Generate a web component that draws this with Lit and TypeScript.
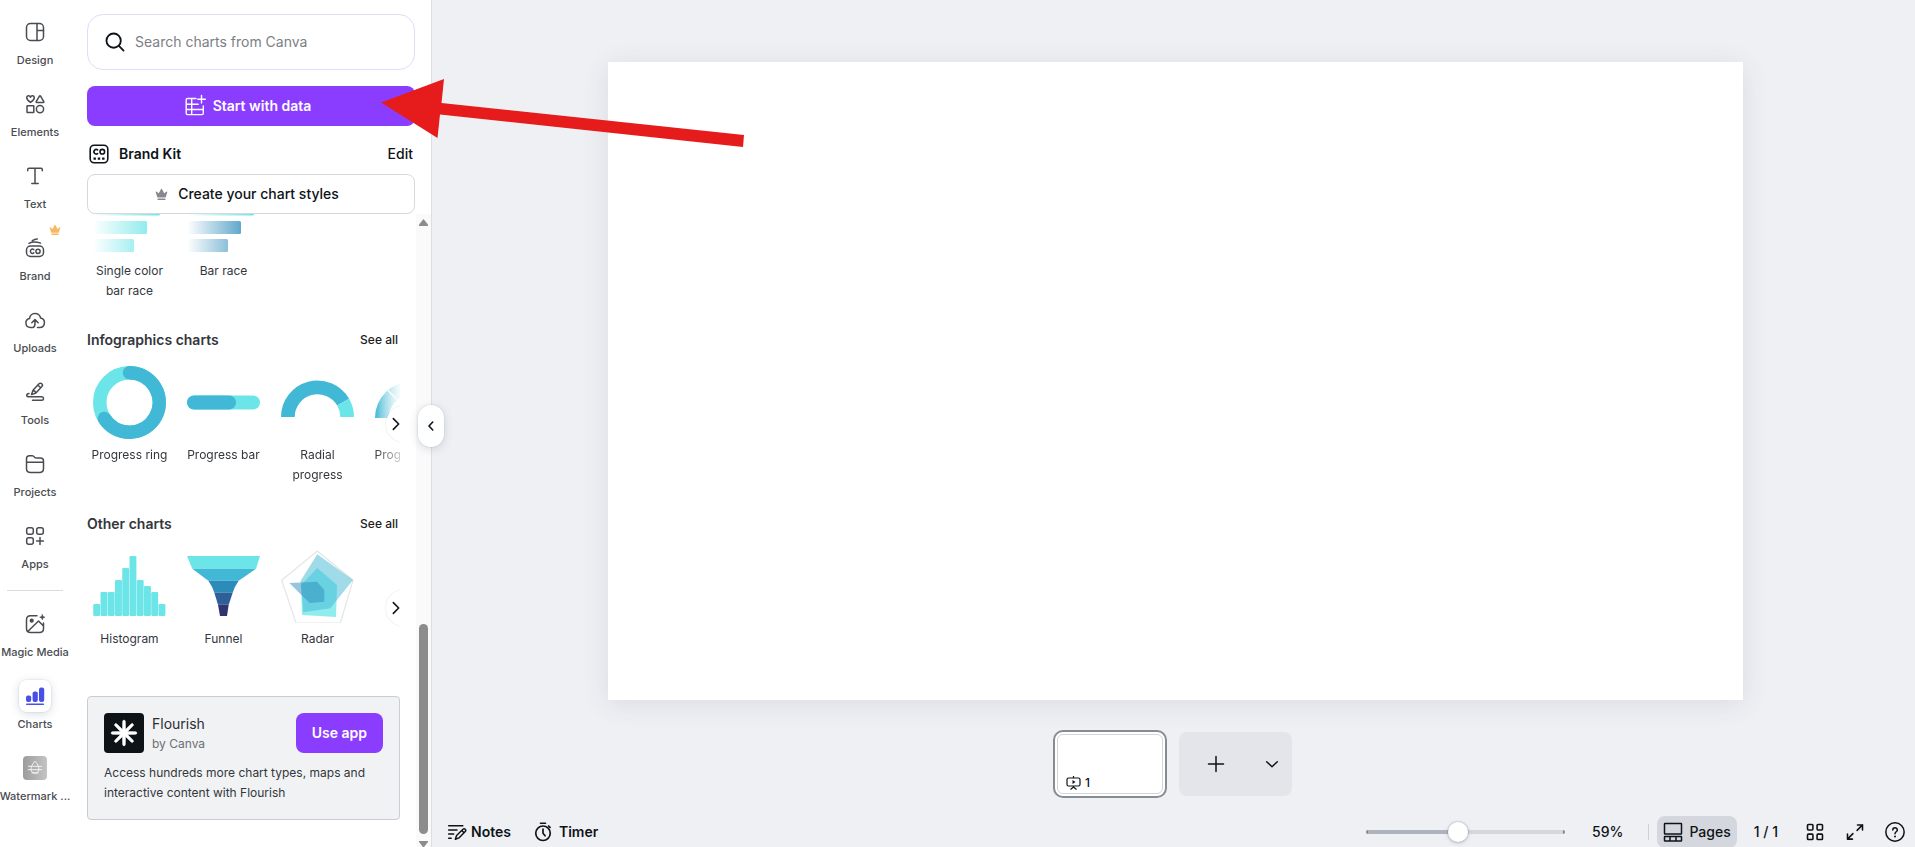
import { LitElement, html, svg, css, TemplateResult } from 'lit';
import { customElement, property } from 'lit/decorators.js';
import { classMap } from 'lit/directives/class-map.js';

const stroke = (size: number, body: TemplateResult, w = 1.5) => html`
  <svg width=${size} height=${size} viewBox="0 0 24 24" fill="none" stroke="currentColor"
    stroke-width=${w} stroke-linecap="round" stroke-linejoin="round" aria-hidden="true">${body}</svg>`;

const crown = (size: number) => html`
  <svg width=${size} height=${size} viewBox="0 0 12 12" fill="currentColor" aria-hidden="true">
    <path d="M2.2 8.8.6 3.600c-.1-.4.3-.6.6-.4l2.300 1.700L5.600 1c.2-.4.6-.4.8 0l2.100 3.900 2.300-1.700c.3-.2.7 0 .6.4L9.800 8.800z"/>
    <rect x="2.2" y="9.6" width="7.6" height="1.4" rx=".7"/>
  </svg>`;

const railIcons: Record<string, TemplateResult> = {
  Design: stroke(24, svg`<rect x="3.5" y="3.5" width="17" height="17" rx="4"/><path d="M14 3.5v17M14 10.5h6.5"/>`),
  Elements: stroke(24, svg`<path d="M7.5 10.4C5.2 8.9 3.7 7.6 3.7 5.8c0-2.400 3-2.700 3.800-.7.800-2 3.800-1.700 3.800.7 0 1.800-1.500 3.100-3.800 4.600z"/><path d="M16.600 3.900 13.200 9.600c-.2.400 0 .8.500.8h6.600c.5 0 .7-.4.500-.8l-3.400-5.700c-.2-.3-.6-.3-.8 0z"/><rect x="4" y="13.700" width="6.800" height="6.800" rx=".5"/><circle cx="17" cy="17.100" r="3.600"/>`),
  Text: stroke(24, svg`<path d="M4.700 6.800V5.500c0-.8.500-1.300 1.300-1.300h12c.8 0 1.300.5 1.300 1.300v1.300M12 4.200v15.300M8.800 19.600h6.400"/>`),
  Brand: stroke(24, svg`<rect x="3.500" y="10" width="17" height="10.500" rx="4"/><path d="M6 7.300c3-1.700 7-1.800 11.600-.2M9.300 4.600c1.500-.9 3.500-1.700 5-1.600M10.800 13.600a2.100 2.100 0 1 0 0 3.300"/><circle cx="15" cy="15.300" r="2.100"/>`),
  Uploads: stroke(24, svg`<path d="M9 19.500H7.500a4.500 4.500 0 0 1-1-8.900A5.600 5.600 0 0 1 17.600 10a4.800 4.800 0 0 1-.8 9.500h-2.300"/><path d="M8.800 14.800 12 11.600l3.200 3.200M12 12v3.500c0 2.500-.8 3.600-2.200 4"/>`),
  Tools: stroke(24, svg`<path d="M8.500 14.600 10 10.200l6-6.400c.7-.8 2-.8 2.800 0 .8.700.8 1.900.1 2.700l-6 6.500zM10 10.200c1.400.3 2.400 1.200 2.900 2.800M15 5.200l2.700 2.500M6 13.600c-3 .2-3 3.200 0 3.200h12.800c2.300 0 2.300 3.500 0 3.500H9.500"/>`),
  Projects: stroke(24, svg`<path d="M3.500 16.500V6.800c0-1.800 1.200-3 3-3h2.700c1.300 0 1.700.5 2.300 1.300.5.700.9 1 1.800 1h4.200c1.800 0 3 1.200 3 3v7.400c0 2.500-1.500 4-4 4h-9c-2.500 0-4-1.500-4-4zM3.500 10.300h17"/>`),
  Apps: stroke(24, svg`<rect x="3.700" y="3.700" width="6.600" height="6.600" rx="2"/><rect x="13.700" y="3.700" width="6.600" height="6.600" rx="2"/><rect x="3.700" y="13.700" width="6.600" height="6.600" rx="2"/><path d="M17 13.600v6.800M13.600 17h6.800"/>`),
  'Magic Media': stroke(24, svg`<path d="M14 3.800H7.500c-2.500 0-4 1.500-4 4v8.700c0 2.500 1.500 4 4 4h9c2.500 0 4-1.500 4-4v-5.600M5 19.300 15.500 9l5 5"/><circle cx="8.700" cy="8.700" r="1.400" fill="currentColor"/><path d="M19.300 2.600l.7 1.900 1.900.7-1.900.7-.7 1.900-.7-1.900-1.900-.7 1.900-.7z" fill="currentColor" stroke-width=".6"/>`),
  Charts: html`<svg width="20" height="20" viewBox="0 0 20 20" fill="#4950e8" aria-hidden="true">
      <rect x="1" y="9.500" width="5.200" height="6.500" rx="2"/><rect x="7.600" y="5.500" width="5.200" height="10.500" rx="2"/><rect x="14" y="1.500" width="5.200" height="14.500" rx="2"/><rect x="1" y="17.500" width="18.200" height="1.600" rx=".8"/></svg>`,
  'Watermark ...': html`<svg width="24" height="24" viewBox="0 0 24 24" fill="none" aria-hidden="true">
      <defs><linearGradient id="wm" x1="0" x2="1"><stop offset="0" stop-color="#9c9c9c"/><stop offset="1" stop-color="#c4c4c4"/></linearGradient></defs>
      <rect width="24" height="24" rx="4" fill="url(#wm)"/>
      <path d="M12 5.200C9.500 8 8 10.500 8 13.200a4 4 0 0 0 8 0C16 10.500 14.500 8 12 5.200zM5 10.300h14M4.800 13.700h14.400M8.500 17h7" stroke="#f1f1f1"/></svg>`,
};

const art: Record<string, TemplateResult> = {
  single: svg`<defs><linearGradient id="s"><stop offset="0" stop-color="#6ce5e8" stop-opacity="0"/><stop offset="1" stop-color="#6ce5e8"/></linearGradient></defs>
    <rect y="21" width="67" height="12.500" rx="1.500" fill="url(#s)"/><rect y="39" width="54" height="13" rx="1.500" fill="url(#s)" opacity=".75"/><rect y="57" width="41" height="13" rx="1.500" fill="url(#s)" opacity=".6"/>`,
  race: svg`<defs><linearGradient id="r1"><stop offset="0" stop-color="#6ce5e8" stop-opacity="0"/><stop offset="1" stop-color="#6ce5e8"/></linearGradient>
    <linearGradient id="r2"><stop offset="0" stop-color="#2d8bba" stop-opacity="0"/><stop offset="1" stop-color="#2d8bba"/></linearGradient></defs>
    <rect y="21" width="67" height="12.500" rx="1.500" fill="url(#r1)"/><rect y="39" width="54" height="13" rx="1.500" fill="url(#r2)" opacity=".75"/><rect y="57" width="41" height="13" rx="1.500" fill="url(#r2)" opacity=".55"/>`,
  ring: svg`<circle cx="36.500" cy="36.500" r="29.750" fill="none" stroke="#6ce5e8" stroke-width="13.500"/>
    <path d="M36.500 6.750A29.750 29.750 0 1 1 11.400 52.500" fill="none" stroke="#41b8d5" stroke-width="13.500" stroke-linecap="round"/>`,
  bar: svg`<rect y="29.500" width="73" height="14" rx="7" fill="#6ce5e8"/><rect y="29.500" width="49" height="14" rx="7" fill="#41b8d5"/>`,
  radial: svg`<path d="M0 51A36.500 36.500 0 0 1 68.100 32.750L56.200 39.600A22.800 22.800 0 0 0 13.700 51z" fill="#41b8d5"/>
    <path d="M68.100 32.750A36.500 36.500 0 0 1 73 51H59.300A22.800 22.800 0 0 0 56.200 39.600z" fill="#6ce5e8"/>`,
  dial: svg`<defs><linearGradient id="d"><stop offset=".05" stop-color="#41b8d5"/><stop offset=".8" stop-color="#41b8d5" stop-opacity=".1"/></linearGradient></defs>
    <path d="M0 52A36.500 36.500 0 0 1 36.500 15.500V29.200A22.800 22.800 0 0 0 13.700 52z" fill="url(#d)"/><path d="M13 24.500l13 13" stroke="#fff" stroke-width="1.200"/>`,
  histogram: svg`${[54, 42, 42, 30, 18, 6, 30, 36, 42, 54].map((y, i) => svg`<rect x=${i * 7.25 + 0.25} y=${y} width="6.900" height=${66 - y} rx="1.200" fill="#6ce5e8"/>`)}`,
  funnel: svg`<path d="M0 6h73l-4 12.700H5.300z" fill="#6ce5e8"/><path d="M5.300 18.700H69L51.700 30.700H21.300z" fill="#41b8d5"/>
    <path d="M21.300 30.700h30.400q-4 5.500-6 12H27.300q-2-6.500-6-12z" fill="#2d8bba"/><path d="M27.300 42.700h18.400l-4 12H31z" fill="#2f5f98"/><path d="M31 54.700h10.700L40 66h-7z" fill="#31356e"/>`,
  radar: svg`<path d="M36.300 1 72 30.300 59.300 73H15L.7 30.300z" fill="none" stroke="#e3e5e8" stroke-width="1.200"/>
    <path d="M36.300 18 56 35l-1 32-34-2-1-30z" fill="#6ce5e8" opacity=".75"/>
    <path d="M36.300 4.300 72 30 49.300 58.300 22.300 62.300 21 46 19.500 31z" fill="#41b8d5" opacity=".5"/>
    <path d="M8.300 33 36 31.700 43.300 40v11.700L28.700 53z" fill="#2d8bba" opacity=".5"/>`,
};

@customElement('rail-item')
class RailItem extends LitElement {
  @property() label = '';
  @property({ type: Boolean }) active = false;
  @property({ type: Boolean }) pro = false;
  static styles = css`
    :host { display: block; }
    button {
      all: unset; box-sizing: border-box; display: flex; flex-direction: column; align-items: center; gap: 4px;
      position: relative; width: 100%; height: 72px; padding-top: 8px; cursor: pointer;
      color: #494c51; font: 500 11px/16px Inter, "Noto Sans", sans-serif; white-space: nowrap;
    }
    .tile { display: grid; place-items: center; width: 32px; height: 32px; border-radius: 8px; }
    .tile.active { background: #fff; box-shadow: 0 0 0 1px rgba(64, 87, 109, .06), 0 2px 10px rgba(64, 87, 109, .2); }
    .tile svg { display: block; }
    .pro { position: absolute; top: 0; right: 9px; color: #f6b860; line-height: 0; }
  `;
  render() {
    return html`<button>
      <span class=${classMap({ tile: true, active: this.active })}>${railIcons[this.label]}</span>
      <span>${this.label}</span>
      ${this.pro ? html`<span class="pro">${crown(12)}</span>` : ''}
    </button>`;
  }
}

@customElement('chart-row')
class ChartRow extends LitElement {
  @property() heading = '';
  @property({ attribute: false }) charts: [string, string][] = [];
  static styles = css`
    :host { display: block; font-family: Inter, "Noto Sans", sans-serif; }
    header { display: flex; align-items: center; justify-content: space-between; height: 24px; margin-bottom: 14px; padding-right: 2px; }
    h2 { margin: 0; font-size: 14px; line-height: 24px; font-weight: 600; color: #33363b; }
    a { font-size: 12px; font-weight: 500; color: #1b1e22; text-decoration: none; }
    .strip { position: relative; overflow: hidden; }
    .items { display: flex; gap: 9px; }
    .fade { -webkit-mask-image: linear-gradient(90deg, #000 calc(100% - 26px), rgba(0, 0, 0, .25)); mask-image: linear-gradient(90deg, #000 calc(100% - 26px), rgba(0, 0, 0, .25)); }
    .item { all: unset; cursor: pointer; flex: 0 0 85px; display: flex; flex-direction: column; align-items: center; gap: 6px; }
    .item svg { display: block; }
    .name { font-size: 12px; line-height: 20px; color: #33363b; text-align: center; }
    .next {
      all: unset; cursor: pointer; box-sizing: border-box; position: absolute; right: -22px; top: 40px; width: 36px; height: 36px;
      display: flex; align-items: center; padding-left: 2px; border-radius: 50%;
      background: #fff; box-shadow: 0 0 0 1px rgba(64, 87, 109, .07); color: #0e1318;
    }
  `;
  render() {
    return html`
      ${this.heading ? html`<header><h2>${this.heading}</h2><a href="#">See all</a></header>` : ''}
      <div class="strip">
        <div class=${classMap({ items: true, fade: this.charts.length > 3 })}>
          ${this.charts.map(([kind, name]) => html`<button class="item">
            <svg width="73" height="73" viewBox="0 0 73 73" aria-hidden="true">${art[kind]}</svg>
            <span class="name">${name}</span></button>`)}
        </div>
        ${this.heading ? html`<button class="next" aria-label="Next">${stroke(16, svg`<path d="M8 4l8 8-8 8"/>`, 2.4)}</button>` : ''}
      </div>`;
  }
}

@customElement('app-root')
class AppRoot extends LitElement {
  static styles = css`
    :host { display: flex; position: relative; height: 100vh; overflow: hidden; background: #eff0f4; color: #0e1318; font: 14px/20px Inter, "Noto Sans", sans-serif; }
    * { box-sizing: border-box; }
    svg { display: block; flex: none; }
    button { all: unset; box-sizing: border-box; cursor: pointer; }

    .rail { flex: 0 0 70px; padding-top: 8px; background: #fff; overflow: hidden; }
    .rail hr { height: 1px; margin: 6px 7px 9px; border: 0; background: #d9dbdf; }

    .panel { position: relative; flex: 0 0 362px; min-width: 0; display: flex; flex-direction: column; background: #fff; border-right: 1px solid #dcdee3; }
    .top { display: flex; flex-direction: column; padding: 14px 16px 0 17px; }
    .search { display: flex; align-items: center; gap: 9px; height: 56px; padding: 0 16px; border: 1px solid #e2dcf8; border-radius: 16px; }
    .search input { flex: 1; min-width: 0; border: 0; outline: 0; padding: 0; background: none; font: inherit; color: inherit; }
    .search input::placeholder { color: #7d8085; opacity: 1; }
    .start { display: flex; align-items: center; justify-content: center; gap: 6px; height: 40px; margin-top: 16px; padding-right: 8px; border-radius: 8px; background: #8b3dff; color: #fff; font-weight: 600; }
    .kit { display: flex; align-items: center; gap: 8px; height: 24px; margin: 16px 2px 8px 0; font-weight: 600; }
    .kit a { margin-left: auto; color: inherit; text-decoration: none; font-weight: 500; }
    .styles { display: flex; align-items: center; justify-content: center; gap: 10px; height: 40px; padding-right: 8px; border: 1px solid #d5d8dd; border-radius: 8px; font-weight: 500; }
    .styles svg { color: #85898f; }

    .body { flex: 1; min-height: 0; display: flex; }
    .list { flex: 1; min-width: 0; display: flex; flex-direction: column; justify-content: flex-end; gap: 27px; padding: 0 16px 27px 17px; overflow: hidden; }
    .list > * { flex: none; }
    .card { margin-top: 20px; display: flex; flex-direction: column; gap: 10px; height: 124px; padding: 16px; border: 1px solid #c9ccd1; border-radius: 4px; background: #f1f2f4; }
    .app { display: flex; align-items: center; gap: 8px; height: 40px; }
    .app .who { flex: 1; padding-top: 2px; line-height: 20px; }
    .who div { color: #2b2e33; }
    .who small { display: block; font-size: 12px; color: #6c7076; }
    .use { height: 40px; padding: 0 16px; border-radius: 8px; background: #8b3dff; color: #fff; font-weight: 600; line-height: 40px; }
    .card p { margin: 0; font-size: 12px; line-height: 20px; color: #33363b; }
    .scroll { flex: 0 0 15px; display: flex; flex-direction: column; align-items: center; padding-top: 5px; background: #fafafa; color: #8c8c8c; }
    .thumb { width: 9px; flex: 0 0 210px; margin: auto 0 7px; border-radius: 5px; background: #8c8c8c; }

    .handle { position: absolute; z-index: 2; right: -13px; top: calc(50% - 19px); width: 26px; height: 42px; display: grid; place-items: center; border-radius: 13px; background: #fff; box-shadow: 0 0 0 1px rgba(64, 87, 109, .06), 0 2px 10px rgba(64, 87, 109, .2); }

    main { flex: 1; min-width: 0; display: flex; flex-direction: column; }
    .stage { flex: 1; min-height: 0; display: flex; justify-content: center; padding: 62px 0 30px 4px; }
    .page { height: 100%; aspect-ratio: 16 / 9; background: #fff; box-shadow: 0 4px 26px rgba(57, 60, 90, .11); }
    .pages { display: flex; justify-content: center; align-items: center; gap: 12px; height: 68px; padding-right: 2px; }
    .pageThumb { width: 114px; height: 68px; padding: 2px; border: 2px solid #868b94; border-radius: 10px; background: #fff; }
    .pageThumb span { display: flex; align-items: flex-end; gap: 4px; height: 60px; padding: 0 8px; border: 1px solid #d2d5da; border-radius: 6px; font-size: 12px; font-weight: 500; }
    .pageThumb svg { margin-bottom: 3px; }
    .add { display: flex; width: 113px; height: 64px; border-radius: 8px; background: #e4e5ea; }
    .add button { display: grid; place-items: center; }
    .add button:first-child { flex: 1; }
    .add button:last-child { flex: 0 0 40px; }

    footer { display: flex; align-items: center; height: 32px; margin: 18px 10px -1px 15px; font-weight: 500; }
    .tool { display: flex; align-items: center; gap: 4px; font-weight: 600; }
    .tool + .tool { margin-left: 22px; gap: 6px; }
    .zoom { width: 199px; height: 20px; margin: 0 27px 0 auto; -webkit-appearance: none; appearance: none; background: none; }
    .zoom::-webkit-slider-runnable-track { height: 4px; border-radius: 2px; background: linear-gradient(90deg, #828790 2px, #aeb4be 2px, #aeb4be 46%, #d5d7dc 46%, #d5d7dc calc(100% - 2px), #828790 calc(100% - 2px)); }
    .zoom::-webkit-slider-thumb { -webkit-appearance: none; width: 20px; height: 20px; margin-top: -8px; border-radius: 50%; background: #fff; box-shadow: 0 0 0 1px rgba(64, 87, 109, .12), 0 1px 4px rgba(64, 87, 109, .3); }
    .rule { width: 1px; height: 16px; margin: 0 8px 0 25px; background: #cdd0d5; }
    .toggle { display: flex; align-items: center; gap: 6px; height: 32px; padding: 0 6px; border-radius: 8px; background: #d4d7de; }
    .count { margin: 0 27px 0 17px; }
    .icons { display: flex; align-items: center; gap: 20px; }

    .arrow { position: absolute; z-index: 3; left: 381px; top: 78px; pointer-events: none; }
  `;

  render() {
    const main = ['Design', 'Elements', 'Text', 'Brand', 'Uploads', 'Tools', 'Projects', 'Apps'];
    const apps = ['Magic Media', 'Charts', 'Watermark ...'];
    return html`
      <nav class="rail">
        ${main.map(l => html`<rail-item label=${l} ?pro=${l === 'Brand'}></rail-item>`)}
        <hr />
        ${apps.map(l => html`<rail-item label=${l} ?active=${l === 'Charts'}></rail-item>`)}
      </nav>

      <aside class="panel">
        <div class="top">
          <label class="search">
            ${stroke(22, svg`<circle cx="10.500" cy="10.500" r="7.800"/><path d="M16.300 16.300l5 5"/>`, 2)}
            <input type="search" placeholder="Search charts from Canva" aria-label="Search charts from Canva" />
          </label>
          <button class="start">
            ${stroke(24, svg`<path d="M13 4.500H4.500c-.8 0-1.300.5-1.300 1.300v13.500c0 .8.500 1.300 1.300 1.300h14.500c.8 0 1.300-.5 1.300-1.300V12M3.200 10.300h12M3.200 15.500h17M8.700 4.500v16M18.500 1.500v7.500M14.800 5.200h7.500"/>`, 1.4)}
            Start with data
          </button>
          <div class="kit">
            ${stroke(24, svg`<rect x="3.200" y="3.200" width="17.600" height="17.600" rx="4"/><path d="M10.600 7.900a2.300 2.300 0 1 0 0 3.700"/><circle cx="15.300" cy="9.700" r="2.300"/><path d="M6.500 16.600h2.400M10.800 16.600h2.400M15.100 16.600h2.400" stroke-width="2.400" stroke-linecap="butt"/>`, 1.6)}
            <span>Brand Kit</span><a href="#">Edit</a>
          </div>
          <button class="styles">${crown(13)} Create your chart styles</button>
        </div>
        <div class="body">
          <div class="list">
            <chart-row .charts=${[['single', 'Single color bar race'], ['race', 'Bar race']]}></chart-row>
            <chart-row heading="Infographics charts" .charts=${[['ring', 'Progress ring'], ['bar', 'Progress bar'], ['radial', 'Radial progress'], ['dial', 'Progress dial']]}></chart-row>
            <chart-row heading="Other charts" .charts=${[['histogram', 'Histogram'], ['funnel', 'Funnel'], ['radar', 'Radar']]}></chart-row>
            <section class="card">
              <div class="app">
                <svg width="40" height="40" viewBox="0 0 40 40" aria-hidden="true"><rect width="40" height="40" rx="4" fill="#0e1318"/>
                  ${[0, 45, 90, 135, 180, 225, 270, 315].map(a => svg`<path d="M18.500 20 18.700 8.500a1.300 1.300 0 0 1 2.600 0L21.500 20z" fill="#fff" stroke="#fff" stroke-width=".6" transform="rotate(${a} 20 20)"/>`)}
                </svg>
                <div class="who"><div>Flourish</div><small>by Canva</small></div>
                <button class="use">Use app</button>
              </div>
              <p>Access hundreds more chart types, maps and interactive content with Flourish</p>
            </section>
          </div>
          <div class="scroll" aria-hidden="true">
            <svg width="9" height="7" viewBox="0 0 9 7" fill="currentColor"><path d="M4.500 0 9 5.500V7H0V5.500z"/></svg>
            <div class="thumb"></div>
            <svg width="9" height="6" viewBox="0 0 9 6" fill="currentColor"><path d="M0 0h9v1L5 6H4L0 1z"/></svg>
          </div>
        </div>
        <button class="handle" aria-label="Hide panel">${stroke(12, svg`<path d="M15.500 4 8 12l7.500 8"/>`, 3.2)}</button>
      </aside>

      <main>
        <div class="stage"><div class="page"></div></div>
        <div class="pages">
          <button class="pageThumb"><span>
            <svg width="15" height="14" viewBox="0 0 15 14" fill="none" stroke="currentColor" stroke-width="1.200" aria-hidden="true"><rect x="1" y="2" width="13" height="8" rx="1.500"/><path d="M7.500 0v2M7.500 10v1.500M4.500 13.500l3-2.500 3 2.500"/><path d="M6.500 4v4L9.500 6z" fill="currentColor" stroke="none"/></svg>
            1</span></button>
          <div class="add">
            <button aria-label="Add page">${stroke(20, svg`<path d="M12 3v18M3 12h18"/>`, 1.8)}</button>
            <button aria-label="Add page options">${stroke(16, svg`<path d="M4 8.500l8 7.500 8-7.500"/>`, 2.2)}</button>
          </div>
        </div>
        <footer>
          <button class="tool">${stroke(20, svg`<path d="M2 4.500h17M2 9.500h10M2 14.500h6M2 19.500h3"/><path d="M10 20.700l1.500-4.500 7.700-7.500c1.800-1.500 4.300.8 2.700 2.700l-7.600 7.700zM17.700 10.200l2.800 2.800"/>`, 1.8)} Notes</button>
          <button class="tool">${stroke(20, svg`<circle cx="12" cy="13.500" r="8.700"/><path d="M9 1.500h6M12 8.500v5l2.500 3M18.700 4.800l1.800 1.700"/>`, 2)} Timer</button>
          <input class="zoom" type="range" min="0" max="100" value="46" aria-label="Zoom" />
          <span>59%</span>
          <span class="rule"></span>
          <button class="toggle">
            <svg width="20" height="20" viewBox="0 0 20 20" fill="none" stroke="currentColor" stroke-width="1.500" stroke-linejoin="round" aria-hidden="true"><rect x="1.500" y="1.500" width="17" height="10.500" rx=".5"/><rect x="1.500" y="14.500" width="17" height="4.500" rx=".5"/><path d="M7 14.500V19M13 14.500V19"/></svg>
            Pages</button>
          <span class="count">1 / 1</span>
          <div class="icons">
            <button aria-label="Grid view">${stroke(20, svg`<rect x="3" y="3" width="6.500" height="6.500" rx="1"/><rect x="14.500" y="3" width="6.500" height="6.500" rx="1"/><rect x="3" y="14.500" width="6.500" height="6.500" rx="1"/><rect x="14.500" y="14.500" width="6.500" height="6.500" rx="1"/>`, 1.9)}</button>
            <button aria-label="Full screen">${stroke(20, svg`<path d="M15 3.500h6v6M21 3.500l-6.500 6.500M9 20.500H3v-6M3 20.500l6.500-6.500"/>`, 1.9)}</button>
            <button aria-label="Help">${stroke(20, svg`<circle cx="12" cy="12" r="11"/><path d="M9.300 9.700c0-3.600 5.500-3.600 5.500-.2 0 2.200-2.800 2.200-2.800 4.500"/><path d="M12 17.300v.2" stroke-width="2.400"/>`, 1.8)}</button>
          </div>
        </footer>
      </main>

      <svg class="arrow" width="364" height="70" viewBox="0 0 364 70" fill="#e61c1c" aria-hidden="true"><path d="M0 24.500 63 1 60.500 25 363 57 362 69 59 36.500 56.500 60z"/></svg>
    `;
  }
}
